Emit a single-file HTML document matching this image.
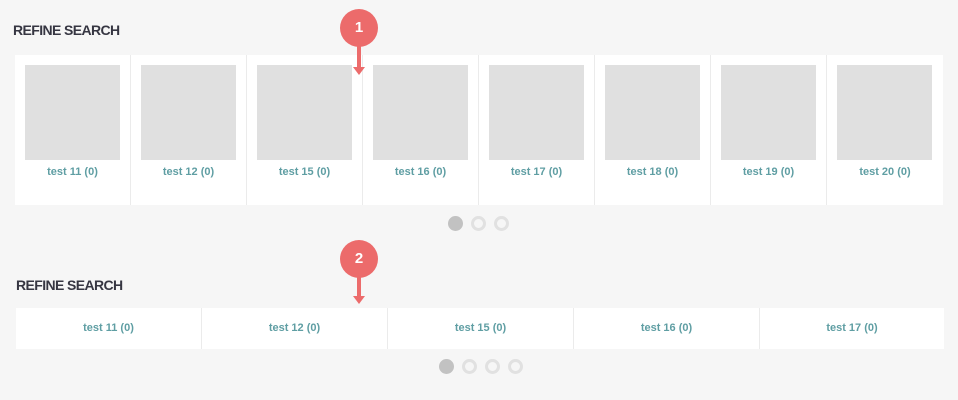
<!DOCTYPE html>
<html><head><meta charset="utf-8"><style>
*{margin:0;padding:0;box-sizing:border-box}
body{width:958px;height:400px;background:#f6f6f6;position:relative;overflow:hidden;font-family:"Liberation Sans",Arial,sans-serif}
.t{position:absolute;font-weight:bold;font-size:14px;color:#363642;letter-spacing:-0.6px}
.box{position:absolute;background:#fff;display:flex}
.c{position:relative;border-left:1px solid #ebebeb;text-align:center;color:#5f9ea3;font-size:11px;font-weight:bold}
.c:first-child{border-left:none}
.img{position:absolute;left:10px;top:10px;width:95px;height:95px;background:#e0e0e0}
.dot{position:absolute;width:15px;height:15px;border-radius:50%;border:3px solid #e1e1e1}
.dot.on{background:#c2c2c2;border-color:#c2c2c2}
.badge{position:absolute;width:38px;height:38px;border-radius:50%;background:#ec6b6b;color:#fff;font-weight:bold;font-size:15px;text-align:center;line-height:38px}
.shaft{position:absolute;width:4px;background:#ec6b6b}
.head{position:absolute;width:0;height:0;border-left:6px solid transparent;border-right:6px solid transparent;border-top:8px solid #ec6b6b}
</style></head><body>
<div class="t" style="left:13px;top:22px">REFINE SEARCH</div>
<div class="box" style="left:15px;top:55px;width:928px;height:150px">
<div class="c" style="width:115px"><div class="img"></div><div style="position:absolute;top:111px;left:0;right:0">test 11 (0)</div></div>
<div class="c" style="width:116px"><div class="img"></div><div style="position:absolute;top:111px;left:0;right:0">test 12 (0)</div></div>
<div class="c" style="width:116px"><div class="img"></div><div style="position:absolute;top:111px;left:0;right:0">test 15 (0)</div></div>
<div class="c" style="width:116px"><div class="img"></div><div style="position:absolute;top:111px;left:0;right:0">test 16 (0)</div></div>
<div class="c" style="width:116px"><div class="img"></div><div style="position:absolute;top:111px;left:0;right:0">test 17 (0)</div></div>
<div class="c" style="width:116px"><div class="img"></div><div style="position:absolute;top:111px;left:0;right:0">test 18 (0)</div></div>
<div class="c" style="width:116px"><div class="img"></div><div style="position:absolute;top:111px;left:0;right:0">test 19 (0)</div></div>
<div class="c" style="width:117px"><div class="img"></div><div style="position:absolute;top:111px;left:0;right:0">test 20 (0)</div></div>
</div>
<div class="dot on" style="left:448px;top:216px"></div>
<div class="dot" style="left:471px;top:216px"></div>
<div class="dot" style="left:494px;top:216px"></div>

<div class="shaft" style="left:357px;top:44px;height:24px"></div>
<div class="head" style="left:353px;top:67px"></div>
<div class="badge" style="left:340px;top:9px">1</div>

<div class="t" style="left:16px;top:277px">REFINE SEARCH</div>
<div class="box" style="left:16px;top:308px;width:928px;height:41px">
<div class="c" style="width:185px;line-height:41px">test 11 (0)</div>
<div class="c" style="width:186px;line-height:41px">test 12 (0)</div>
<div class="c" style="width:186px;line-height:41px">test 15 (0)</div>
<div class="c" style="width:186px;line-height:41px">test 16 (0)</div>
<div class="c" style="width:185px;line-height:41px">test 17 (0)</div>
</div>
<div class="dot on" style="left:439px;top:359px"></div>
<div class="dot" style="left:462px;top:359px"></div>
<div class="dot" style="left:485px;top:359px"></div>
<div class="dot" style="left:508px;top:359px"></div>

<div class="shaft" style="left:357px;top:274px;height:23px"></div>
<div class="head" style="left:353px;top:296px"></div>
<div class="badge" style="left:340px;top:240px">2</div>
</body></html>
